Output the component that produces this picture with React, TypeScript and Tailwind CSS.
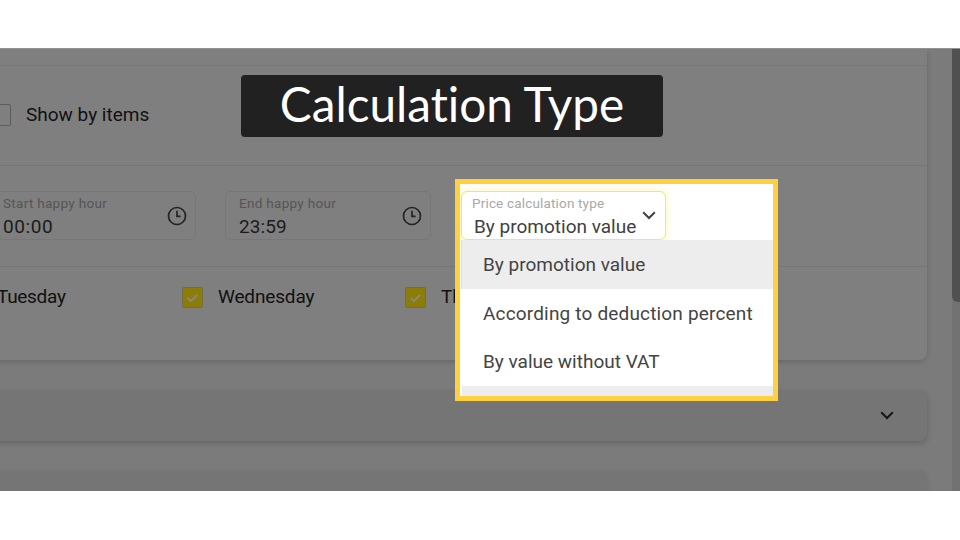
import React from "react";

interface TimeFieldProps {
  label: string;
  value: string;
  className: string;
  valueClassName: string;
}

const ClockIcon: React.FC = () => (
  <svg width="20" height="20" viewBox="0 0 20 20" fill="none" stroke="#242424" strokeWidth="1.7">
    <circle cx="10" cy="10" r="8.5" />
    <path d="M10 4.8V10.4H13.6" />
  </svg>
);

const Chevron: React.FC<{ color: string }> = ({ color }) => (
  <svg width="14" height="9" viewBox="0 0 14 9" fill="none" stroke={color} strokeWidth="2">
    <path d="M1.2 1.3L7 7L12.8 1.3" />
  </svg>
);

const TimeField: React.FC<TimeFieldProps> = ({ label, value, className, valueClassName }) => (
  <div className={`flex h-[49px] items-center justify-between rounded-md border border-[#777] pr-2 ${className}`}>
    <div className="whitespace-nowrap pt-px">
      <div className="text-[13.5px] leading-[20px] tracking-[0.3px] text-[#555]">{label}</div>
      <div className={`text-[19px] leading-[27px] text-[#1b1b1b] ${valueClassName}`}>{value}</div>
    </div>
    <ClockIcon />
  </div>
);

const CheckedBox: React.FC = () => (
  <div className="flex size-[21px] shrink-0 items-center justify-center rounded-[2px] border border-[#706c45] bg-[#8b7d08]">
    <svg width="13" height="10" viewBox="0 0 13 10" fill="none" stroke="#898989" strokeWidth="1.8">
      <path d="M1.5 4.8L4.8 8L11.2 1.8" />
    </svg>
  </div>
);

const App: React.FC = () => {
  return (
    <div className="h-[540px] w-[960px] overflow-hidden bg-white pt-[48px] font-['Roboto',sans-serif]">
      <div className="relative flex h-[443px] justify-between overflow-hidden border-t border-[#929292] bg-[#7b7b7b]">
        {/* Promotion form */}
        <div className="w-[927px]">
          <div className="-ml-4 h-[311px] overflow-hidden rounded-br-lg bg-[#7f7f7f] pl-4 shadow-[0_2px_5px_rgba(0,0,0,0.16)]">
            <div className="h-[17px] border-b border-[#7a7a7a]" />
            <div className="flex h-[100px] items-center border-b border-[#777] pb-px">
              <div className="-ml-[11px] size-[22px] shrink-0 rounded-[2px] border border-[#5c5c5c]" />
              <span className="ml-[15px] whitespace-nowrap text-[19px] text-[#111]">Show by items</span>
            </div>
            <div className="flex h-[101px] items-center border-b border-[#777] pb-px">
              <TimeField label="Start happy hour" value="00:00" className="-ml-[10px] w-[206px] pl-[12px]" valueClassName="tracking-[0.6px]" />
              <TimeField label="End happy hour" value="23:59" className="ml-[29px] w-[206px] pl-[13px]" valueClassName="tracking-[0.1px]" />
            </div>
            <div className="flex h-[61px] items-center whitespace-nowrap text-[19px] tracking-[-0.15px] text-[#111]">
              <span className="-ml-[3px] w-[185px] tracking-[-0.3px]">Tuesday</span>
              <CheckedBox />
              <span className="ml-[15px] w-[187px]">Wednesday</span>
              <CheckedBox />
              <span className="ml-[15px]">Th</span>
            </div>
          </div>
          <div className="-ml-4 mt-[31px] flex h-[50px] items-center justify-end rounded-r-lg bg-[#757575] pb-[2px] pr-[33px] shadow-[0_2px_6px_rgba(0,0,0,0.2)]">
            <Chevron color="#171717" />
          </div>
          <div className="-ml-4 mt-[30px] h-[40px] rounded-tr-lg bg-[#757575] shadow-[0_1px_5px_rgba(0,0,0,0.1)]" />
        </div>

        {/* Scrollbar */}
        <div className="w-[8px] bg-[#727272]">
          <div className="h-[253px] rounded-bl-md bg-[#505050]" />
        </div>

        {/* Caption */}
        <div className="absolute left-[241px] top-[26px] flex h-[62px] w-[422px] items-center justify-center rounded bg-[#212121] pb-[4px]">
          <span className="whitespace-nowrap font-['Lato',sans-serif] text-[47.7px] leading-[58px] text-white [font-variant-ligatures:none]">
            Calculation Type
          </span>
        </div>

        {/* Price calculation dropdown */}
        <div className="absolute left-[455px] top-[130px] flex h-[222px] w-[323px] flex-col overflow-hidden border-[5px] border-[#ffd040] bg-white">
          <div className="ml-px mt-[7px] flex h-[49px] w-[205px] shrink-0 items-center justify-between rounded-md border border-[#f8e65b] bg-white pl-[10px] pr-[9px] shadow-[0_0_9px_rgba(250,230,60,0.4)]">
            <div className="whitespace-nowrap pt-px">
              <div className="text-[13.5px] leading-[20px] tracking-[0.17px] text-[#a9a9a9]">Price calculation type</div>
              <div className="pl-[2px] text-[19px] leading-[27px] text-[#414141]">By promotion value</div>
            </div>
            <Chevron color="#414141" />
          </div>
          <ul className="z-10 ml-[2px] flex-1 whitespace-nowrap bg-[#ededed] text-[19px] text-[#444]">
            <li className="-ml-px flex h-[49px] items-center border-l border-[#f8e65b] bg-[#ededed] pl-[21px] pt-[2px]">By promotion value</li>
            <li className="flex h-[49px] items-center bg-white pl-[21px] pt-[2px] tracking-[0.17px]">According to deduction percent</li>
            <li className="flex h-[48px] items-center bg-white pl-[21px]">By value without VAT</li>
          </ul>
        </div>
      </div>
    </div>
  );
};

export default App;
